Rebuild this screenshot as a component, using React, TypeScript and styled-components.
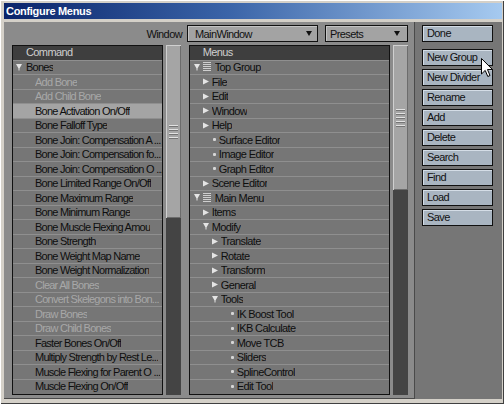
import styled, { createGlobalStyle } from 'styled-components';

const UI_FONT = `"Liberation Sans", Arial, sans-serif`;

const GlobalStyle = createGlobalStyle`
  html, body {
    margin: 0;
    padding: 0;
    background: #d4d0c8;
  }
  body {
    font-family: ${UI_FONT};
    font-size: 11px;
    letter-spacing: -0.6px;
  }
`;

interface CommandRow {
  label: string;
  group?: boolean;
  disabled?: boolean;
  selected?: boolean;
}

type MenuKind = 'root' | 'open' | 'closed' | 'item';

interface MenuRow {
  level: number;
  kind: MenuKind;
  label: string;
}

const commands: CommandRow[] = [
  { label: 'Bones', group: true },
  { label: 'Add Bone', disabled: true },
  { label: 'Add Child Bone', disabled: true },
  { label: 'Bone Activation On/Off', selected: true },
  { label: 'Bone Falloff Type' },
  { label: 'Bone Join: Compensation A ...' },
  { label: 'Bone Join: Compensation fo...' },
  { label: 'Bone Join: Compensation O ...' },
  { label: 'Bone Limited Range On/Off' },
  { label: 'Bone Maximum Range' },
  { label: 'Bone Minimum Range' },
  { label: 'Bone Muscle Flexing Amou' },
  { label: 'Bone Strength' },
  { label: 'Bone Weight Map Name' },
  { label: 'Bone Weight Normalization' },
  { label: 'Clear All Bones', disabled: true },
  { label: 'Convert Skelegons into Bon...', disabled: true },
  { label: 'Draw Bones', disabled: true },
  { label: 'Draw Child Bones', disabled: true },
  { label: 'Faster Bones On/Off' },
  { label: 'Multiply Strength by Rest Le...' },
  { label: 'Muscle Flexing for Parent O ...' },
  { label: 'Muscle Flexing On/Off' },
];

const menus: MenuRow[] = [
  { level: 0, kind: 'root', label: 'Top Group' },
  { level: 1, kind: 'closed', label: 'File' },
  { level: 1, kind: 'closed', label: 'Edit' },
  { level: 1, kind: 'closed', label: 'Window' },
  { level: 1, kind: 'closed', label: 'Help' },
  { level: 1, kind: 'item', label: 'Surface Editor' },
  { level: 1, kind: 'item', label: 'Image Editor' },
  { level: 1, kind: 'item', label: 'Graph Editor' },
  { level: 1, kind: 'closed', label: 'Scene Editor' },
  { level: 0, kind: 'root', label: 'Main Menu' },
  { level: 1, kind: 'closed', label: 'Items' },
  { level: 1, kind: 'open', label: 'Modify' },
  { level: 2, kind: 'closed', label: 'Translate' },
  { level: 2, kind: 'closed', label: 'Rotate' },
  { level: 2, kind: 'closed', label: 'Transform' },
  { level: 2, kind: 'closed', label: 'General' },
  { level: 2, kind: 'open', label: 'Tools' },
  { level: 3, kind: 'item', label: 'IK Boost Tool' },
  { level: 3, kind: 'item', label: 'IKB Calculate' },
  { level: 3, kind: 'item', label: 'Move TCB' },
  { level: 3, kind: 'item', label: 'Sliders' },
  { level: 3, kind: 'item', label: 'SplineControl' },
  { level: 3, kind: 'item', label: 'Edit Tool' },
];

const buttons = ['New Group', 'New Divider', 'Rename', 'Add', 'Delete', 'Search', 'Find', 'Load', 'Save'];

function TriDown() {
  return (
    <svg width='6' height='7' viewBox='0 0 6 7'>
      <path d='M0 0H6L3.5 4.5V6.5H2.5V4.5Z' fill='#e4e4e4' />
    </svg>
  );
}

function TriRight() {
  return (
    <svg width='6' height='7' viewBox='0 0 6 7'>
      <path d='M0 0.5L6 3.5L0 6.5Z' fill='#e4e4e4' />
    </svg>
  );
}

function GroupIcon() {
  return (
    <svg width='8' height='10' viewBox='0 0 8 10'>
      {[0.5, 2.5, 4.5, 6.5, 8.5].map((y) => (
        <line key={y} x1='0' x2='8' y1={y} y2={y} stroke='#cfcfcf' strokeWidth='1' />
      ))}
    </svg>
  );
}

function Cursor() {
  return (
    <CursorWrap>
      <svg width='13' height='20' viewBox='0 0 13 20'>
        <path
          d='M0.5 0.5V16L4.2 12.4L6.8 18.5L9 17.5L6.5 11.6H11.5Z'
          fill='#ffffff'
          stroke='#000000'
          strokeWidth='1'
          strokeLinejoin='miter'
        />
      </svg>
    </CursorWrap>
  );
}

export default function App() {
  return (
    <>
      <GlobalStyle />
      <Window>
        <TitleBar>Configure Menus</TitleBar>
        <Body>
          <Main>
            <TopBar>
              <Label>Window</Label>
              <Dropdown $width={131} $pl={7} $pr={5}>
                <span>MainWindow</span>
                <DropArrow />
              </Dropdown>
              <Dropdown $width={83} $pl={4} $pr={7}>
                <span>Presets</span>
                <DropArrow />
              </Dropdown>
            </TopBar>
            <Lists>
              <List $width={152}>
                <ListHeader>Command</ListHeader>
                {commands.map((c) => (
                  <Row
                    key={c.label}
                    $pl={c.group ? 3 : 22}
                    $tight
                    $selected={c.selected}
                    $disabled={c.disabled}
                  >
                    {c.group && (
                      <Marker $gap={4}>
                        <TriDown />
                      </Marker>
                    )}
                    <RowText>{c.label}</RowText>
                  </Row>
                ))}
              </List>
              <ScrollBar>
                <Thumb $height={173}>
                  {[0, 1, 2, 3].map((i) => (
                    <Grip key={i} />
                  ))}
                </Thumb>
              </ScrollBar>
              <Spacer />
              <List $width={203}>
                <ListHeader>Menus</ListHeader>
                {menus.map((m, i) => (
                  <Row key={i} $pl={4 + m.level * 9}>
                    {m.kind === 'root' && (
                      <>
                        <Marker $gap={3}>
                          <TriDown />
                        </Marker>
                        <Marker $gap={4}>
                          <GroupIcon />
                        </Marker>
                      </>
                    )}
                    {m.kind === 'open' && (
                      <Marker $gap={3}>
                        <TriDown />
                      </Marker>
                    )}
                    {m.kind === 'closed' && (
                      <Marker $gap={3}>
                        <TriRight />
                      </Marker>
                    )}
                    {m.kind === 'item' && <Bullet />}
                    <RowText>{m.label}</RowText>
                  </Row>
                ))}
              </List>
              <ScrollBar>
                <Thumb $height={145}>
                  {[0, 1, 2, 3, 4].map((i) => (
                    <Grip key={i} />
                  ))}
                </Thumb>
              </ScrollBar>
            </Lists>
          </Main>
          <SidePanel>
            <Button $first>Done</Button>
            {buttons.map((b) => (
              <Button key={b}>{b}</Button>
            ))}
          </SidePanel>
        </Body>
        <Cursor />
      </Window>
    </>
  );
}

const Window = styled.div`
  position: relative;
  width: 504px;
  height: 404px;
  box-sizing: border-box;
  padding: 3px 2px 0 4px;
  background: #d4d0c8;
  box-shadow: inset 1px 1px 0 #ffffff, inset -1px -1px 0 #404040;
  display: flex;
  flex-direction: column;
  gap: 3px;
  overflow: hidden;
`;

const TitleBar = styled.div`
  height: 16px;
  padding-left: 2px;
  display: flex;
  align-items: center;
  background: linear-gradient(90deg, #0a246a 0%, #3a64a8 45%, #a6caf0 100%);
  color: #ffffff;
  font-weight: 700;
  font-size: 11px;
  letter-spacing: -0.3px;
`;

const Body = styled.div`
  height: 377px;
  display: flex;
`;

const Main = styled.div`
  width: 411px;
  box-sizing: border-box;
  padding: 3px 6px 0 8px;
  background: #8b8b8b;
  border-right: 1px solid #4a4a4a;
  border-bottom: 1px solid #4a4a4a;
  display: flex;
  flex-direction: column;
  gap: 3px;
`;

const TopBar = styled.div`
  height: 17px;
  display: flex;
  justify-content: flex-end;
  align-items: center;
  gap: 7px;
`;

const Label = styled.span`
  margin-right: -2px;
  color: #111111;
`;

const Dropdown = styled.div<{ $width: number; $pl: number; $pr: number }>`
  width: ${(p) => p.$width}px;
  height: 17px;
  box-sizing: border-box;
  padding: 0 ${(p) => p.$pr}px 0 ${(p) => p.$pl}px;
  border: 1px solid #111111;
  background: #a3a3a3;
  box-shadow: inset 1px 1px 0 #c4c4c4;
  display: flex;
  align-items: center;
  justify-content: space-between;
  color: #111111;
`;

const DropArrow = styled.span`
  width: 0;
  height: 0;
  border-left: 3.5px solid transparent;
  border-right: 3.5px solid transparent;
  border-top: 5px solid #111111;
`;

const Lists = styled.div`
  height: 349.5px;
  display: flex;
  gap: 3px;
`;

const Spacer = styled.div`
  width: 2px;
`;

const List = styled.div<{ $width: number }>`
  width: ${(p) => p.$width}px;
  box-sizing: border-box;
  border: 1px solid #111111;
  background: #767676;
  display: flex;
  flex-direction: column;
  overflow: hidden;
`;

const ListHeader = styled.div`
  height: 13.5px;
  flex: none;
  padding-left: 13px;
  background: #3e3e3e;
  color: #cfcfcf;
  line-height: 13.5px;
`;

const Row = styled.div<{ $pl: number; $tight?: boolean; $selected?: boolean; $disabled?: boolean }>`
  height: 14.5px;
  flex: none;
  box-sizing: border-box;
  padding-left: ${(p) => p.$pl}px;
  border-top: 1px solid #8f8f8f;
  background: ${(p) => (p.$selected ? '#a4a4a4' : 'transparent')};
  color: ${(p) => (p.$disabled ? '#a8a8a8' : '#0e0e0e')};
  letter-spacing: ${(p) => (p.$tight ? -0.75 : -0.6)}px;
  display: flex;
  align-items: center;
  white-space: nowrap;
  overflow: hidden;
`;

const RowText = styled.span`
  overflow: hidden;
`;

const Marker = styled.span<{ $gap: number }>`
  display: flex;
  align-items: center;
  margin-right: ${(p) => p.$gap}px;
`;

const Bullet = styled.span`
  width: 3px;
  height: 3px;
  margin: 0 3px 0 10px;
  border-radius: 1px;
  background: #d6d6d6;
`;

const ScrollBar = styled.div`
  width: 15px;
  background: #444444;
  display: flex;
  flex-direction: column;
`;

const Thumb = styled.div<{ $height: number }>`
  height: ${(p) => p.$height}px;
  background: #a5a5a5;
  box-shadow: inset 1px 1px 0 #d0d0d0, inset -1px -1px 0 #6c6c6c;
  display: flex;
  flex-direction: column;
  align-items: center;
  justify-content: center;
  gap: 3px;
`;

const Grip = styled.div`
  width: 9px;
  height: 1px;
  background: #e2e2e2;
  box-shadow: 0 1px 0 #747474;
`;

const SidePanel = styled.div`
  flex: 1;
  padding: 3px 0 0 7px;
  background: #767676;
  display: flex;
  flex-direction: column;
  gap: 3px;
`;

const Button = styled.div<{ $first?: boolean }>`
  width: 71px;
  height: 17px;
  box-sizing: border-box;
  margin-bottom: ${(p) => (p.$first ? 3.5 : 0)}px;
  padding-left: 4px;
  border: 1px solid #101010;
  background: #a9b5c1;
  box-shadow: inset 1px 1px 0 #d4dde6;
  color: #111111;
  line-height: 15px;
  white-space: nowrap;
`;

const CursorWrap = styled.div`
  position: absolute;
  left: 481px;
  top: 58px;
  width: 13px;
  height: 20px;
  pointer-events: none;
`;
